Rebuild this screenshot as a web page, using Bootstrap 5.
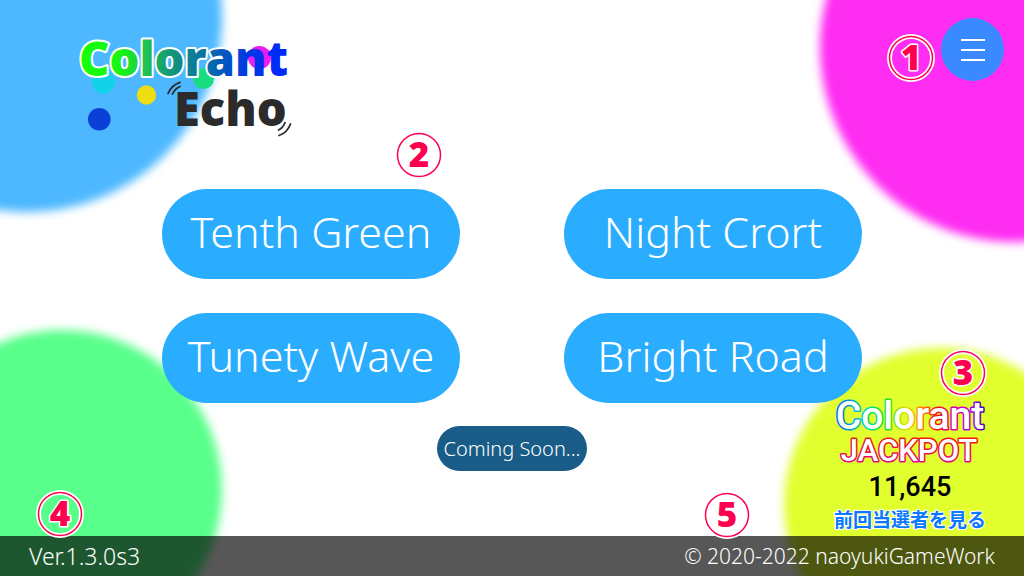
<!DOCTYPE html>
<html lang="ja">
<head>
<meta charset="utf-8">
<meta name="viewport" content="width=device-width, initial-scale=1">
<title>Colorant Echo</title>
<link href="https://cdn.jsdelivr.net/npm/bootstrap@5.3.0/dist/css/bootstrap.min.css" rel="stylesheet">
<style>
body { font-family: "Noto Sans", "Noto Sans CJK JP", sans-serif; background: #fff; }
.blob { position: absolute; border-radius: 50%; filter: blur(5px); }
.blob-blue { width: 390px; height: 390px; left: -168px; top: -178px; background: #4db8ff; }
.blob-pink { width: 390px; height: 390px; right: -186px; top: -148px; background: #ff2cf2; }
.blob-green { width: 320px; height: 320px; left: -98px; bottom: -74px; background: #59ff8b; }
.blob-yellow { width: 314px; height: 314px; right: -74px; bottom: -86px; background: #e1ff2e; }
.top-bar { padding: 18px 20px 0 70px; }
.logo { width: 232px; height: 104px; margin-top: 18px; }
.menu-btn { width: 63px; height: 63px; background: #3a89ff; }
.stage-list { max-width: 700px; padding-top: 49px; }
.stage-grid { display: grid; grid-template-columns: 1fr 1fr; gap: 34px 104px; }
.stage-btn { height: 90px; background: #2aacff; color: #fff; font-weight: 300; font-size: 43px; line-height: 60px; white-space: nowrap; border-radius: 48px; padding: 0 0 4px; }
.soon-btn { width: 150px; height: 45px; background: #185c87; color: #fff; font-weight: 300; font-size: 20px; border-radius: 24px; padding: 0; margin-top: 23px; white-space: nowrap; }
.stage-btn:hover, .soon-btn:hover, .menu-btn:hover { filter: brightness(1.06); color: #fff; }
.marker { position: absolute; width: 44px; height: 44px; z-index: 3; }
.marker circle { fill: none; }
.marker text { font: 900 35px "Noto Sans", sans-serif; text-anchor: middle; fill: #ff0050; stroke: #fff; stroke-width: 3px; stroke-linejoin: round; paint-order: stroke; }
.ring-edge { stroke: #fff; stroke-width: 5px; }
.ring-line { stroke: #ff0050; stroke-width: 1.5px; }
.mark-menu { right: 91px; top: 36px; }
.mark-stage { left: 235px; top: -7px; }
.mark-jackpot { right: 2px; top: -44px; }
.mark-version { left: 38px; top: -44px; }
.mark-copy { right: 275px; top: -43px; }
.jackpot { position: absolute; right: 37px; bottom: 45px; width: 154px; }
.jackpot-logo { display: block; width: 154px; height: 72px; }
.jackpot-total { font: 500 27px/40px Roboto, sans-serif; color: #000; }
.jackpot-link { font: 700 19px/24px "Noto Sans CJK JP", sans-serif; color: #0a78ff; white-space: nowrap; text-shadow: 1px 1px #fff, -1px -1px #fff, 1px -1px #fff, -1px 1px #fff; }
.foot { height: 40px; background: rgba(0, 0, 0, .66); color: #fff; font-weight: 300; font-size: 21px; line-height: 40px; padding: 0 29px; }
.foot-version { font-size: 23px; }
</style>
</head>
<body>
<div class="position-relative min-vh-100 d-flex flex-column overflow-hidden">
  <div class="blob blob-blue"></div>
  <div class="blob blob-pink"></div>
  <div class="blob blob-green"></div>
  <div class="blob blob-yellow"></div>

  <header class="top-bar position-relative d-flex justify-content-between align-items-start">
    <svg class="logo overflow-visible" viewBox="70 36 232 104" role="img" aria-label="Colorant Echo">
      <defs>
        <linearGradient id="nameFill" gradientUnits="userSpaceOnUse" x1="80" y1="0" x2="288" y2="0">
          <stop offset="0" stop-color="#16ff0c"/><stop offset=".2" stop-color="#18f516"/>
          <stop offset=".33" stop-color="#20bc58"/><stop offset=".46" stop-color="#129080"/>
          <stop offset=".63" stop-color="#066aac"/><stop offset=".8" stop-color="#0038e4"/>
          <stop offset="1" stop-color="#0026ff"/>
        </linearGradient>
        <linearGradient id="nameEdge" gradientUnits="userSpaceOnUse" x1="80" y1="0" x2="288" y2="0">
          <stop offset=".79" stop-color="#fff"/><stop offset=".8" stop-color="#fff" stop-opacity="0"/>
        </linearGradient>
      </defs>
      <circle cx="103.500" cy="82" r="11.500" fill="#12d2e8"/>
      <circle cx="203.500" cy="78.500" r="10.500" fill="#18dc80"/>
      <circle cx="146.500" cy="95" r="9.700" fill="#eedd12"/>
      <circle cx="99.300" cy="119.300" r="11.300" fill="#0b40d8"/>
      <circle cx="259.500" cy="57.500" r="11.500" fill="#e91cf2"/>
      <g font-family="Noto Sans" font-weight="900" font-size="47">
        <text x="79" y="76" fill="url(#nameFill)" stroke="url(#nameEdge)" stroke-width="4" stroke-linejoin="round" paint-order="stroke">Colorant</text>
        <text x="174" y="126" fill="#2b2b2b">Echo</text>
      </g>
      <g fill="none" stroke="#2b2b2b" stroke-width="1.800" stroke-linecap="round">
        <path d="M168 93.500Q171 85.500 180 82.300M172.500 94Q175 88.500 180 86.500"/>
        <path d="M279 135.500Q287.500 132.500 290.500 124M278.500 130Q283 128 285 122.500"/>
      </g>
    </svg>
    <button type="button" class="menu-btn btn rounded-circle border-0 p-0" aria-label="Menu">
      <svg width="24" height="26" viewBox="0 0 24 26" stroke="#fff" stroke-width="2"><path d="M0 3H24M0 13H24M0 23H24"/></svg>
    </button>
    <svg class="marker mark-menu overflow-visible" viewBox="0 0 44 44"><circle class="ring-edge" cx="22" cy="22" r="21.500"/><circle class="ring-line" cx="22" cy="22" r="21.500"/><text x="22" y="34">1</text></svg>
  </header>

  <main class="stage-list position-relative w-100 mx-auto flex-grow-1 d-flex flex-column">
    <div class="stage-grid">
      <button type="button" class="stage-btn btn border-0">Tenth Green</button>
      <button type="button" class="stage-btn btn border-0">Night Crort</button>
      <button type="button" class="stage-btn btn border-0">Tunety Wave</button>
      <button type="button" class="stage-btn btn border-0">Bright Road</button>
    </div>
    <button type="button" class="soon-btn btn border-0 mx-auto">Coming Soon...</button>
    <svg class="marker mark-stage overflow-visible" viewBox="0 0 44 44"><circle class="ring-edge" cx="22" cy="22" r="21.500"/><circle class="ring-line" cx="22" cy="22" r="21.500"/><text x="22" y="34">2</text></svg>
  </main>

  <aside class="jackpot text-center">
    <svg class="jackpot-logo overflow-visible" viewBox="834 396 154 72" role="img" aria-label="Colorant JACKPOT">
      <defs>
        <linearGradient id="rainbow" gradientUnits="userSpaceOnUse" x1="837" y1="0" x2="986" y2="0">
          <stop offset="0" stop-color="#0060e0"/><stop offset=".14" stop-color="#00b8e8"/>
          <stop offset=".25" stop-color="#00e070"/><stop offset=".34" stop-color="#20e020"/>
          <stop offset=".47" stop-color="#e8e000"/><stop offset=".56" stop-color="#ff9000"/>
          <stop offset=".68" stop-color="#f01020"/><stop offset=".78" stop-color="#e000a0"/>
          <stop offset=".88" stop-color="#c000e8"/><stop offset="1" stop-color="#4000c8"/>
        </linearGradient>
        <linearGradient id="hot" x1="0" y1="0" x2="0" y2="1">
          <stop offset=".2" stop-color="#f01808"/><stop offset=".9" stop-color="#e000a0"/>
        </linearGradient>
      </defs>
      <g font-family="Roboto" font-weight="500" fill="#fff" stroke-width="3" stroke-linejoin="round" paint-order="stroke" text-anchor="middle">
        <text x="911" y="430" font-size="39" stroke="url(#rainbow)">Colorant</text>
        <text x="910" y="462" font-size="31" stroke="url(#hot)">JACKPOT</text>
      </g>
    </svg>
    <div class="jackpot-total">11,645</div>
    <a class="jackpot-link d-block text-decoration-none" href="#winners">前回当選者を見る</a>
    <svg class="marker mark-jackpot overflow-visible" viewBox="0 0 44 44"><circle class="ring-edge" cx="22" cy="22" r="21.500"/><circle class="ring-line" cx="22" cy="22" r="21.500"/><text x="22" y="34">3</text></svg>
  </aside>

  <footer class="foot position-relative d-flex justify-content-between">
    <span class="foot-version">Ver.1.3.0s3</span>
    <span>© 2020-2022 naoyukiGameWork</span>
    <svg class="marker mark-version overflow-visible" viewBox="0 0 44 44"><circle class="ring-edge" cx="22" cy="22" r="21.500"/><circle class="ring-line" cx="22" cy="22" r="21.500"/><text x="22" y="34">4</text></svg>
    <svg class="marker mark-copy overflow-visible" viewBox="0 0 44 44"><circle class="ring-edge" cx="22" cy="22" r="21.500"/><circle class="ring-line" cx="22" cy="22" r="21.500"/><text x="22" y="34">5</text></svg>
  </footer>
</div>
<script src="https://cdn.jsdelivr.net/npm/bootstrap@5.3.0/dist/js/bootstrap.bundle.min.js"></script>
</body>
</html>
